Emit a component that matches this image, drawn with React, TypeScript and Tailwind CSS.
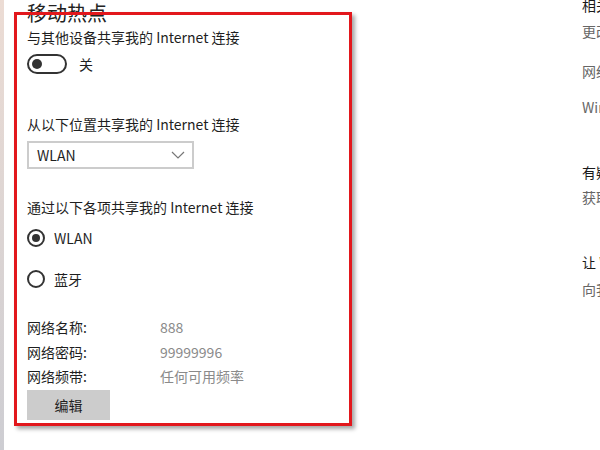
import React from "react";

const font = { fontFamily: '"Noto Sans CJK SC", "Noto Sans", sans-serif' };

export default function App() {
  return (
    <div
      className="relative flex w-[600px] h-[450px] overflow-hidden bg-white text-[14px] text-[#1f1f1f]"
      style={font}
    >
      <div className="w-[4px] h-full shrink-0 bg-gradient-to-b from-[#ecdcd4] to-[#cdcdd2]" />
      <div className="w-[578px] shrink-0 flex flex-col pl-[23px]">
        <div className="h-[26px] leading-[26px] text-[20px] text-[#222]">移动热点</div>
        <div className="mt-[1px] h-[20px] leading-[20px]">与其他设备共享我的 Internet 连接</div>
        <div className="mt-[7px] h-[20px] flex items-center gap-[12px]">
          <div className="w-[40px] h-[20px] rounded-full border-2 border-[#333] flex items-center pl-[3px]">
            <div className="w-[10px] h-[10px] rounded-full bg-[#333]" />
          </div>
          <span className="leading-[20px]">关</span>
        </div>
        <div className="mt-[40px] h-[20px] leading-[20px]">从以下位置共享我的 Internet 连接</div>
        <div className="mt-[7px] w-[167px] h-[28px] border-2 border-[#cccccc] flex items-center justify-between pl-[8px] pr-[7px]">
          <span className="leading-[20px]">WLAN</span>
          <svg width="14" height="8" viewBox="0 0 14 8" fill="none">
            <path d="M1 1L7 7L13 1" stroke="#777" strokeWidth="1.2" />
          </svg>
        </div>
        <div className="mt-[28px] h-[20px] leading-[20px]">通过以下各项共享我的 Internet 连接</div>
        <div className="mt-[11px] h-[20px] flex items-center gap-[9px]">
          <div className="w-[18px] h-[18px] rounded-full border-2 border-[#333] flex items-center justify-center">
            <div className="w-[8px] h-[8px] rounded-full bg-[#333]" />
          </div>
          <span className="leading-[20px]">WLAN</span>
        </div>
        <div className="mt-[21px] h-[20px] flex items-center gap-[9px]">
          <div className="w-[18px] h-[18px] rounded-full border-2 border-[#333]" />
          <span className="leading-[20px]">蓝牙</span>
        </div>
        <div className="mt-[28px] h-[20px] flex leading-[20px]">
          <span className="w-[133px]">网络名称:</span>
          <span className="text-[#8a8a8a]">888</span>
        </div>
        <div className="mt-[5px] h-[20px] flex leading-[20px]">
          <span className="w-[133px]">网络密码:</span>
          <span className="text-[#8a8a8a]">99999996</span>
        </div>
        <div className="mt-[4px] h-[20px] flex leading-[20px]">
          <span className="w-[133px]">网络频带:</span>
          <span className="text-[#8a8a8a]">任何可用频率</span>
        </div>
        <div className="mt-[4px] w-[83px] h-[30px] bg-[#cccccc] flex items-center justify-center">
          编辑
        </div>
      </div>
      <div className="flex-1 flex flex-col whitespace-nowrap">
        <div className="mt-[-5px] h-[20px] leading-[20px] text-[#1a1a1a]">相关设置</div>
        <div className="mt-[6px] h-[20px] leading-[20px] text-[#666]">更改适配器选项</div>
        <div className="mt-[20px] h-[20px] leading-[20px] text-[#666]">网络和共享中心</div>
        <div className="mt-[16px] h-[20px] leading-[20px] text-[#666]">Windows 防火墙</div>
        <div className="mt-[45px] h-[20px] leading-[20px] text-[#1a1a1a]">有疑问?</div>
        <div className="mt-[5px] h-[20px] leading-[20px] text-[#666]">获取帮助</div>
        <div className="mt-[45px] h-[20px] leading-[20px] text-[#1a1a1a]">让 Windows 变得更好</div>
        <div className="mt-[7px] h-[20px] leading-[20px] text-[#666]">向我们提供反馈</div>
      </div>
      <div className="pointer-events-none absolute left-[14px] top-[12px] w-[338px] h-[414px] border-[3px] border-[#e2171c] shadow-[3px_3px_4px_rgba(0,0,0,0.35)]" />
    </div>
  );
}
